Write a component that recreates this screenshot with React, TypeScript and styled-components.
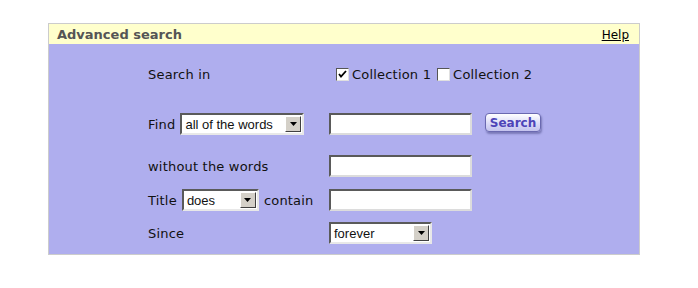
import styled, { createGlobalStyle } from "styled-components";

const GlobalStyle = createGlobalStyle`
  body {
    margin: 0;
    background: #ffffff;
    font-family: "DejaVu Sans", Verdana, sans-serif;
    font-size: 13px;
    color: #111;
  }
`;

const Page = styled.div`
  width: 698px;
  height: 288px;
  padding: 23px 0 0 48px;
  box-sizing: border-box;
`;

const Panel = styled.div`
  width: 590px;
  border: 1px solid #cccccc;
  background: #afaeee;
`;

const Header = styled.div`
  height: 20px;
  background: #ffffcc;
  display: flex;
  align-items: center;
  justify-content: space-between;
  padding: 1px 10px 0 8px;
  box-sizing: border-box;
`;

const Title = styled.span`
  font-weight: bold;
  color: #555555;
  font-size: 13px;
`;

const HelpLink = styled.a`
  color: #000;
  text-decoration: underline;
  font-size: 12px;
`;

const Body = styled.div`
  padding: 19px 0 10px 99px;
  display: flex;
  flex-direction: column;
  letter-spacing: 0.2px;
`;

const Row = styled.div<{ $top?: number }>`
  display: flex;
  align-items: center;
  height: 22px;
  margin-top: ${(p) => p.$top ?? 0}px;
`;

const Label = styled.div`
  width: 181px;
  display: flex;
  align-items: center;
  gap: 5px;
  white-space: nowrap;
`;

const Field = styled.div<{ $indent?: number }>`
  display: flex;
  align-items: center;
  padding-left: ${(p) => p.$indent ?? 0}px;
`;

const TextInput = styled.input`
  width: 143px;
  height: 22px;
  box-sizing: border-box;
  border-style: solid;
  border-width: 2px;
  border-color: #5a5a5a #dcdcdc #dcdcdc #5a5a5a;
  background: #fff;
  padding: 0 3px;
  font-size: 13px;
  outline: none;
`;

const SelectBox = styled.div<{ $w: number }>`
  width: ${(p) => p.$w}px;
  height: 22px;
  box-sizing: border-box;
  display: inline-flex;
  align-items: center;
  justify-content: space-between;
  border-style: solid;
  border-width: 2px;
  border-color: #5a5a5a #e8e8e8 #e8e8e8 #5a5a5a;
  background: #fff;
  font-family: "Liberation Sans", Arial, sans-serif;
  font-size: 13px;
  letter-spacing: 0;
  padding-left: 3px;
`;

const Arrow = styled.span`
  width: 16px;
  height: 16px;
  margin-right: 1px;
  box-sizing: border-box;
  background: #d4d0c8;
  border-style: solid;
  border-width: 1px;
  border-color: #ffffff #404040 #404040 #ffffff;
  display: flex;
  align-items: center;
  justify-content: center;
`;

const Select = ({ value, width }: { value: string; width: number }) => (
  <SelectBox $w={width}>
    <span>{value}</span>
    <Arrow>
      <svg width="7" height="4" viewBox="0 0 7 4">
        <path d="M0 0h7L3.5 4z" fill="#000" />
      </svg>
    </Arrow>
  </SelectBox>
);

const CheckGroup = styled.label`
  display: inline-flex;
  align-items: center;
  gap: 3px;
  margin-right: 6px;
`;

const Box = styled.span`
  width: 13px;
  height: 13px;
  box-sizing: border-box;
  border-style: solid;
  border-width: 1px;
  border-color: #555 #e0e0e0 #e0e0e0 #555;
  background: #fff;
  display: inline-flex;
  align-items: center;
  justify-content: center;
`;

const Check = ({ label, checked }: { label: string; checked?: boolean }) => (
  <CheckGroup>
    <Box>
      {checked && (
        <svg width="9" height="9" viewBox="0 0 9 9">
          <path d="M1 4l2 2.5L8 1" stroke="#000" strokeWidth="1.8" fill="none" />
        </svg>
      )}
    </Box>
    {label}
  </CheckGroup>
);

const SearchButton = styled.button`
  margin-left: 13px;
  width: 56px;
  height: 19px;
  padding: 0;
  border: 1px solid #6a69b0;
  border-radius: 4px;
  background: linear-gradient(#ffffff, #d8d8f6 60%, #c4c3ee);
  box-shadow: 1px 2px 2px rgba(60, 60, 120, 0.45);
  color: #4d44b8;
  font-family: "DejaVu Sans", Verdana, sans-serif;
  font-weight: bold;
  font-size: 12px;
  margin-top: -3px;
`;

export default function App() {
  return (
    <Page>
      <GlobalStyle />
      <Panel>
        <Header>
          <Title>Advanced search</Title>
          <HelpLink href="#">Help</HelpLink>
        </Header>
        <Body>
          <Row>
            <Label>Search in</Label>
            <Field $indent={7}>
              <Check label="Collection 1" checked />
              <Check label="Collection 2" />
            </Field>
          </Row>
          <Row $top={28}>
            <Label>
              Find <Select value="all of the words" width={124} />
            </Label>
            <Field>
              <TextInput />
              <SearchButton>Search</SearchButton>
            </Field>
          </Row>
          <Row $top={20}>
            <Label>without the words</Label>
            <Field>
              <TextInput />
            </Field>
          </Row>
          <Row $top={12}>
            <Label>
              Title <Select value="does" width={77} /> contain
            </Label>
            <Field>
              <TextInput />
            </Field>
          </Row>
          <Row $top={11}>
            <Label>Since</Label>
            <Field>
              <Select value="forever" width={103} />
            </Field>
          </Row>
        </Body>
      </Panel>
    </Page>
  );
}
